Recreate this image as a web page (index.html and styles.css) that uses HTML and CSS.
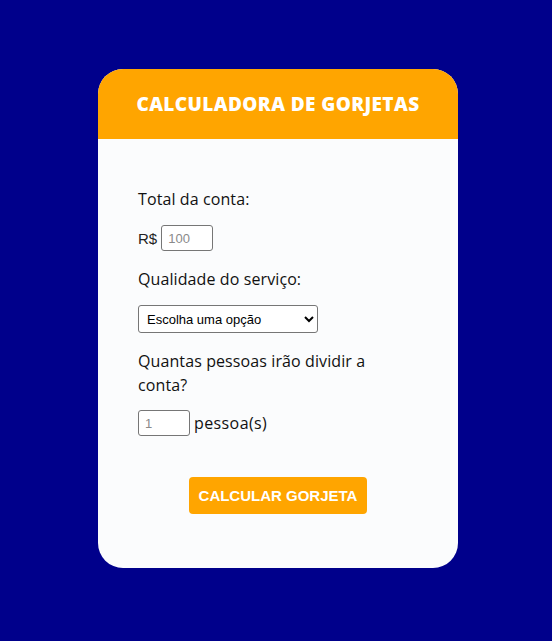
FILE: index.html
```html
<!DOCTYPE html>
<html lang="pt-BR">
<head>
<meta charset="utf-8">
<title>Calculadora de Gorjetas</title>
<link rel="stylesheet" href="styles.css">
</head>
<body>
<main class="card">
  <header class="card-header">
    <h1 class="title">CALCULADORA DE GORJETAS</h1>
  </header>
  <form class="card-body">
    <p class="label label-first">Total da conta:</p>
    <div class="row row-bill">
      <span class="prefix">R$</span>
      <input class="field" type="text" placeholder="100">
    </div>
    <p class="label">Qualidade do serviço:</p>
    <select class="select">
      <option>Escolha uma opção</option>
    </select>
    <p class="label label-wrap">Quantas pessoas irão dividir a conta?</p>
    <div class="row row-people">
      <input class="field" type="text" placeholder="1">
      <span class="suffix">pessoa(s)</span>
    </div>
    <div class="actions">
      <button class="btn" type="button">CALCULAR GORJETA</button>
    </div>
  </form>
</main>
</body>
</html>
```
FILE: styles.css
```css
html, body {
  margin: 0;
  padding: 0;
}
body {
  background: #00008b;
  min-height: 641px;
  font-family: "Open Sans", "DejaVu Sans", sans-serif;
}
.card {
  width: 360px;
  height: 499px;
  margin: 69px 0 0 98px;
  background: #fbfcfd;
  border-radius: 25px;
  overflow: hidden;
  display: flex;
  flex-direction: column;
}
.card-header {
  height: 70px;
  background: #ffa500;
  display: flex;
  align-items: center;
  justify-content: center;
}
.title {
  margin: 0;
  color: #ffffff;
  font-family: "Open Sans", sans-serif;
  font-weight: 800;
  font-size: 19px;
  letter-spacing: 0.4px;
  white-space: nowrap;
}
.card-body {
  padding: 48px 40px 0 40px;
  display: flex;
  flex-direction: column;
  align-items: flex-start;
}
.label {
  margin: 16px 0 14px 0;
  font-size: 16px;
  line-height: 24px;
  color: #111111;
  letter-spacing: 0.1px;
}
.label-first {
  margin-top: 0;
}
.label-wrap {
  width: 240px;
  margin-bottom: 13px;
}
.row {
  display: flex;
  align-items: center;
  gap: 4px;
  color: #111;
}
.prefix {
  font-family: "Liberation Sans", Arial, sans-serif;
  font-size: 15px;
  color: #222;
}
.suffix {
  font-size: 16px;
  letter-spacing: 0.4px;
}
.field {
  width: 52px;
  height: 26px;
  box-sizing: border-box;
  border: 1px solid #767676;
  border-radius: 3px;
  padding: 0 6px;
  font-family: "Liberation Sans", Arial, sans-serif;
  font-size: 13px;
  background: #fff;
}
.field::placeholder {
  color: #8a8a8a;
}
.select {
  width: 180px;
  height: 28px;
  box-sizing: border-box;
  font-family: "Liberation Sans", Arial, sans-serif;
  font-size: 13px;
  color: #000;
  border: 1px solid #767676;
  border-radius: 3px;
  background: #fff;
  padding: 0 4px;
}
.row-people {
  margin-bottom: 41px;
}
.actions {
  align-self: stretch;
  display: flex;
  justify-content: center;
}
.btn {
  width: 178px;
  height: 37px;
  padding: 0;
  white-space: nowrap;
  border: none;
  border-radius: 4px;
  background: #ffa500;
  color: #fff;
  font-family: "Liberation Sans", Arial, sans-serif;
  font-weight: 700;
  font-size: 15px;
  cursor: pointer;
}
```
